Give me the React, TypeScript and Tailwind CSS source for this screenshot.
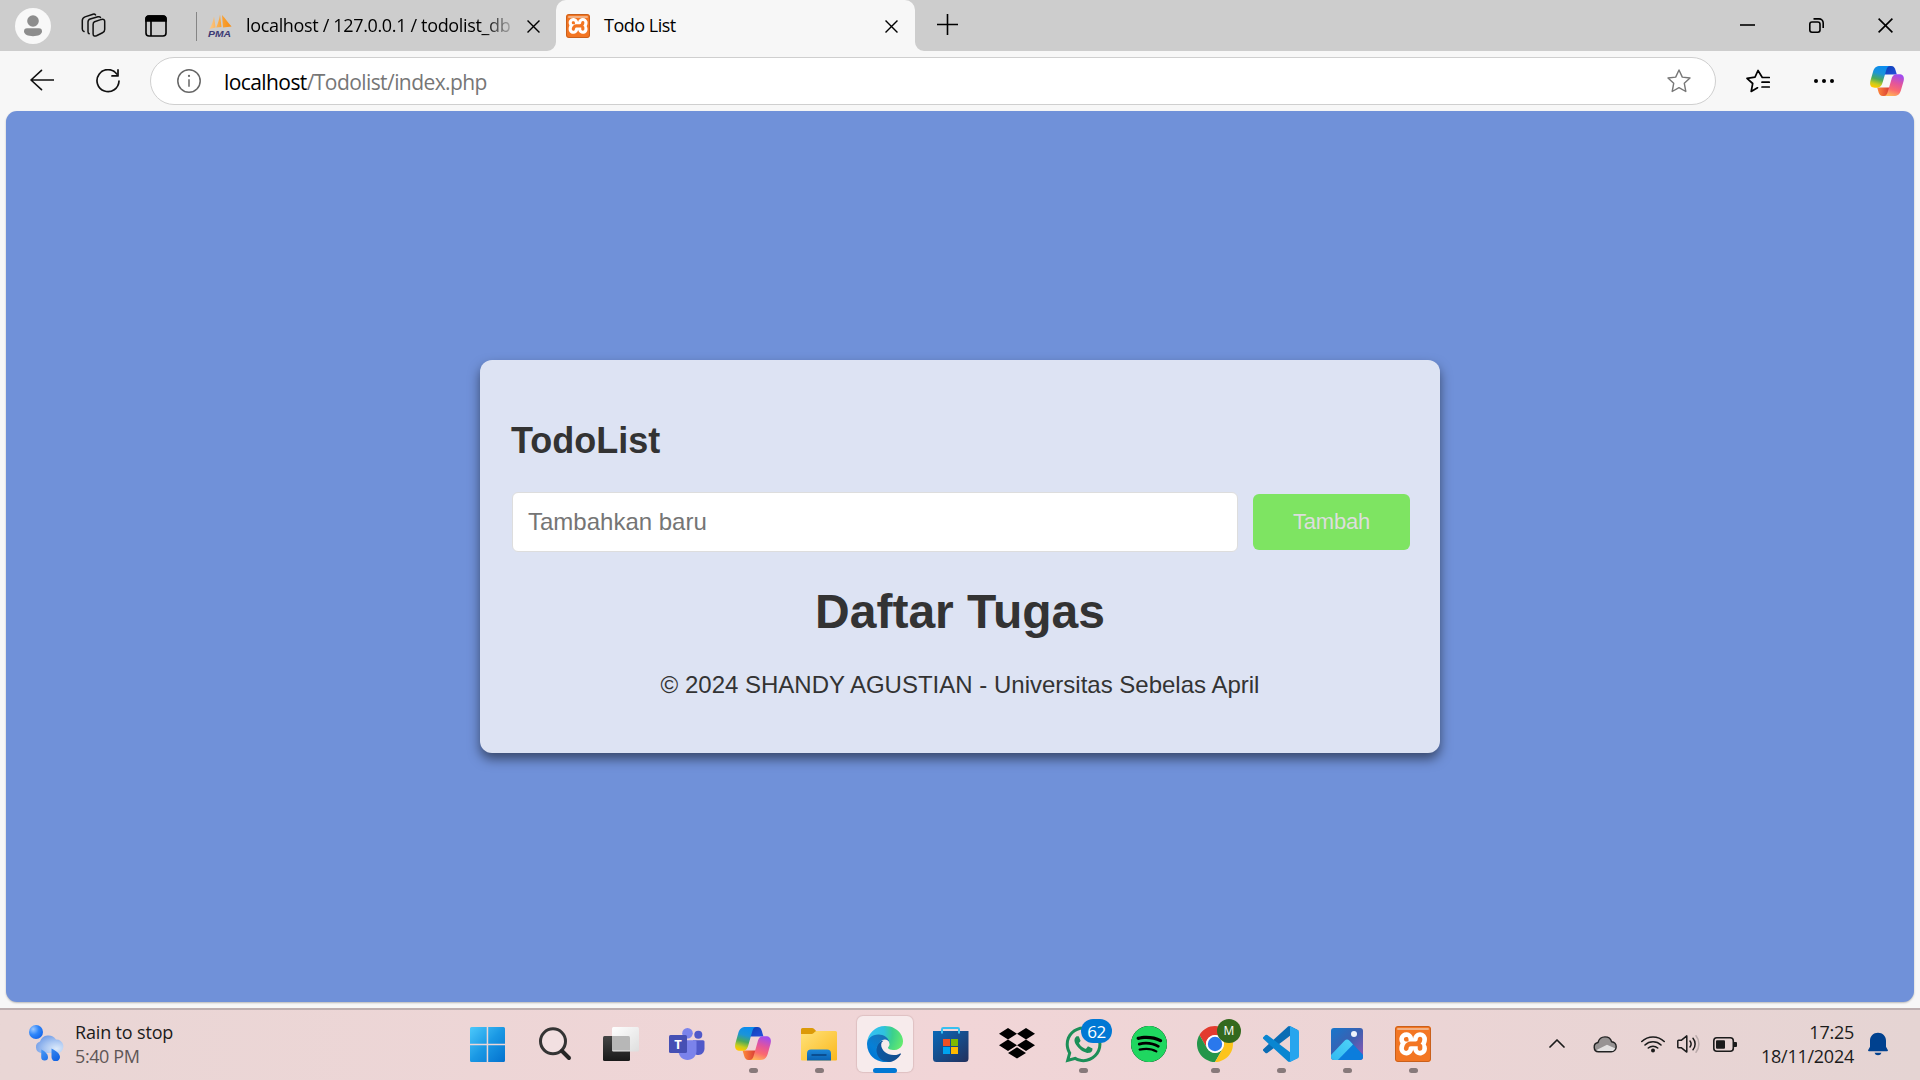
import React from "react";
import { SiSpotify, SiXampp } from "react-icons/si";
import { FaWhatsapp } from "react-icons/fa";

const ui = "font-['Open_Sans','Noto_Sans',sans-serif]";
const arial = "font-['Liberation_Sans',Arial,sans-serif]";

type IconProps = { className?: string };

function Cross({ className }: IconProps) {
  return (
    <svg viewBox="0 0 15 15" className={className} fill="none" stroke="#000" strokeWidth="1.6">
      <path d="M.6.6l13.8 13.8M14.4.6L.6 14.4" />
    </svg>
  );
}

function Xampp({ className }: IconProps) {
  return (
    <div className={`relative overflow-hidden rounded-[3px] bg-white ${className}`}>
      <SiXampp className="absolute -inset-px h-[calc(100%+2px)] w-[calc(100%+2px)] text-[#f37623]" />
      <div className="absolute inset-0 rounded-[3px] border-[1.5px] border-[#c9601c]" />
      <div className="absolute inset-x-[2px] top-[1.5px] h-[2px] rounded bg-[#f2b184]" />
    </div>
  );
}

function Copilot({ id, className }: IconProps & { id: string }) {
  const ribbon =
    "M11 0H21.500C18.900 0 18 1.800 17.100 5L13.400 18C12.200 22.200 10.800 23.800 7.600 23.800H5.200C.4 23.800-.5 20.300.4 16.500L3.300 6C4.600 1.800 6.600 0 11 0Z";
  const fold = "M17 0H22.500C25 0 26.100 1.600 26.900 4.200L28.400 9.400H15Z";
  return (
    <svg viewBox="0 0 36 33" className={className} preserveAspectRatio="none">
      <defs>
        <linearGradient id={id + "a"} x1=".6" y1="0" x2=".35" y2="1">
          <stop offset="0" stopColor="#0a8cf0" />
          <stop offset=".35" stopColor="#1c94d8" />
          <stop offset=".62" stopColor="#4aa95c" />
          <stop offset=".85" stopColor="#c9cc1c" />
          <stop offset="1" stopColor="#ffc800" />
        </linearGradient>
        <linearGradient id={id + "b"} x1=".35" y1="1" x2=".65" y2="0">
          <stop offset="0" stopColor="#a04cf0" />
          <stop offset=".4" stopColor="#e3559b" />
          <stop offset=".7" stopColor="#fa6a70" />
          <stop offset="1" stopColor="#ffb45a" />
        </linearGradient>
        <linearGradient id={id + "c"} x1="0" y1="0" x2="1" y2="1">
          <stop offset="0" stopColor="#0c3fb4" />
          <stop offset="1" stopColor="#2450dc" />
        </linearGradient>
        <linearGradient id={id + "d"} x1="0" y1="0" x2="1" y2="0">
          <stop offset="0" stopColor="#d83a34" />
          <stop offset="1" stopColor="#ff8a3c" />
        </linearGradient>
      </defs>
      <path d={fold} fill={`url(#${id}c)`} />
      <path d={fold} fill={`url(#${id}d)`} transform="rotate(180 18 16.500)" />
      <path d={ribbon} fill={`url(#${id}a)`} />
      <path d={ribbon} fill={`url(#${id}b)`} transform="rotate(180 18 16.500)" />
    </svg>
  );
}

function PmaIcon() {
  return (
    <svg viewBox="0 0 24 24" className="h-6 w-6 overflow-visible">
      <defs>
        <linearGradient id="sail" x1="0" x2="1">
          <stop offset="0" stopColor="#fbc98c" />
          <stop offset=".5" stopColor="#f9a63c" />
          <stop offset="1" stopColor="#f68c12" />
        </linearGradient>
      </defs>
      <path d="M6 3.500L7.600 14.500 1.500 16C3.600 12.500 5.200 8.500 6 3.500ZM12 1.500L13.500 14 8.200 14.400C9.800 10.400 11.400 6.400 12 1.500ZM14 2C18 6 20 10 23.600 13.600L15 14.400Z" fill="url(#sail)" />
      <text x="0" y="23.600" fontSize="9" fontWeight="700" fontStyle="italic" fill="#3c3a74" textLength="23" lengthAdjust="spacingAndGlyphs" fontFamily="Liberation Sans, sans-serif">PMA</text>
    </svg>
  );
}

function TabStrip() {
  return (
    <div className="flex h-[51px] bg-[#cdcdcd]">
      <div className="ml-[15px] mt-2 h-9 w-9">
        <svg viewBox="0 0 36 36">
          <circle cx="18" cy="18" r="18" fill="#f8f8f8" />
          <circle cx="18" cy="13" r="5.800" fill="#8d8d8d" />
          <path d="M12 20.300h12a3 3 0 0 1 3 3c0 3.200-4 4.900-9 4.900s-9-1.700-9-4.900a3 3 0 0 1 3-3z" fill="#8d8d8d" />
        </svg>
      </div>
      <svg viewBox="0 0 25 25" className="ml-[30px] mt-[13px] h-[25px] w-[25px]" fill="none" stroke="#111" strokeWidth="1.500" strokeLinejoin="round" strokeLinecap="round">
        <path d="M13.500 8.700l7-2.300q3.200-.8 3.200 2.200v8q0 2.300-2.200 3.200l-6 2.900q-3.400 1.400-3.400-2V11.500q0-2.200 1.400-2.800Z" />
        <path d="M19.500 4.500q-.6-1.200-2.600-.7L9.200 6Q7 6.700 7 9.100v9.400q0 1.800 1.200 2.300" />
        <path d="M14.500 1.900q-.8-1.200-2.500-.7L4 3.900Q1.300 5 1.300 7.600v8.400q0 2 1.700 2.500" />
      </svg>
      <svg viewBox="0 0 22 22" className="ml-[39px] mt-[15px] h-[22px] w-[22px]" fill="none" stroke="#000" strokeWidth="1.600">
        <rect x="1" y="1" width="20" height="20" rx="3" />
        <path d="M1 6V4a3 3 0 0 1 3-3h14a3 3 0 0 1 3 3v2z" fill="#000" />
        <path d="M6 6v15" />
      </svg>
      <div className="ml-[29px] mt-3 h-[29px] w-px bg-[#858585]" />
      <div className="ml-[11px] mt-[13px]"><PmaIcon /></div>
      <div className={`ml-[14px] mt-3 w-[265px] overflow-hidden whitespace-nowrap text-[18px] leading-[27px] tracking-[-0.34px] text-black ${ui} [mask-image:linear-gradient(90deg,#000_90%,transparent_102%)]`}>
        localhost / 127.0.0.1 / todolist_db
      </div>
      <Cross className="ml-4 mt-5 h-[13px] w-[13px]" />
      <div className="relative ml-4 flex h-[51px] w-[359px] rounded-t-[10px] bg-[#f7f7f7]">
        <svg viewBox="0 0 9 9" className="absolute -left-[9px] bottom-0 h-[9px] w-[9px]"><path d="M9 0v9H0a9 9 0 0 0 9-9z" fill="#f7f7f7" /></svg>
        <svg viewBox="0 0 9 9" className="absolute -right-[9px] bottom-0 h-[9px] w-[9px]"><path d="M0 0v9h9a9 9 0 0 1-9-9z" fill="#f7f7f7" /></svg>
        <Xampp className="ml-[10px] mt-[14px] h-6 w-6" />
        <div className={`ml-[14px] mt-3 w-[268px] text-[18px] leading-[27px] tracking-[-0.500px] text-black ${ui}`}>Todo List</div>
        <Cross className="ml-[13px] mt-5 h-[13px] w-[13px]" />
      </div>
      <svg viewBox="0 0 21 21" className="ml-[22px] mt-[14px] h-[21px] w-[21px]" stroke="#000" strokeWidth="1.600"><path d="M10.500 0v21M0 10.500h21" /></svg>
      <div className="ml-auto mr-[27px] mt-[18px] flex gap-[54px]">
        <svg viewBox="0 0 15 15" className="h-[15px] w-[15px]" stroke="#000" strokeWidth="1.600"><path d="M0 7h15" /></svg>
        <svg viewBox="0 0 15 15" className="h-[15px] w-[15px]" fill="none" stroke="#000" strokeWidth="1.600">
          <rect x=".8" y="4" width="10.200" height="10.200" rx="2.200" />
          <path d="M4.500.900h5.500a4.200 4.200 0 0 1 4.200 4.200V10" />
        </svg>
        <Cross className="h-[15px] w-[15px]" />
      </div>
    </div>
  );
}

function Toolbar() {
  return (
    <div className="flex h-[60px] items-start bg-[#f7f7f7]">
      <svg viewBox="0 0 24 22" className="ml-[30px] mt-[18px] h-[22px] w-6" fill="none" stroke="#111" strokeWidth="1.600" strokeLinecap="round" strokeLinejoin="round">
        <path d="M11.500 1.300L1 11l10.500 9.700M1 11h22.500" />
      </svg>
      <svg viewBox="0 0 24 24" className="ml-[42px] mt-[18px] h-6 w-6" fill="none" stroke="#111" strokeWidth="1.700" strokeLinecap="round" strokeLinejoin="round">
        <path d="M20.800 5A11 11 0 1 0 23 12" />
        <path d="M22 .9v6h-6" />
      </svg>
      <div className="ml-[30px] mt-[6px] flex h-12 w-[1566px] items-center rounded-full border border-[#cfcfcf] bg-white">
        <svg viewBox="0 0 24 24" className="ml-[26px] h-6 w-6" fill="none" stroke="#666" strokeWidth="1.500">
          <circle cx="12" cy="12" r="11.200" />
          <path d="M12 10.300v7.500" />
          <circle cx="12" cy="6.900" r="1.100" fill="#666" stroke="none" />
        </svg>
        <div className={`ml-[23px] mt-[2px] text-[21px] leading-none tracking-[-0.580px] text-[#767676] ${ui}`}>
          <span className="text-black">localhost</span>/Todolist/index.php
        </div>
        <svg viewBox="0 0 24 24" className="ml-auto mr-6 h-6 w-6" fill="none" stroke="#777" strokeWidth="1.400" strokeLinejoin="round">
          <path d="M12 1l3.300 7.100 7.700.9-5.700 5.300 1.500 8.200L12 18.700l-6.800 3.800 1.500-8.200L1 9l7.700-.9z" />
        </svg>
      </div>
      <svg viewBox="0 0 24 24" className="ml-[30px] mt-[18px] h-6 w-6" fill="none" stroke="#000" strokeWidth="1.700" strokeLinejoin="round" strokeLinecap="round">
        <path d="M23.300 8.500h-7L12 1.500 9 8.200 1 9.300l5.700 5.200-1.500 8 6.300-3.700" />
        <path d="M16 13.200h7.300M16 18h7.300" />
      </svg>
      <svg viewBox="0 0 20 4" className="ml-11 mt-7 h-1 w-5"><circle cx="2" cy="2" r="2" /><circle cx="10" cy="2" r="2" /><circle cx="18" cy="2" r="2" /></svg>
      <Copilot id="ct" className="ml-9 mt-[15px] h-[30px] w-[34px]" />
    </div>
  );
}

function TodoCard() {
  return (
    <div className={`h-[393px] w-[960px] rounded-[12px] bg-[#dde3f3] text-[#333] shadow-[0_6px_12px_rgba(0,0,0,0.5)] ${arial}`}>
      <h2 className="ml-[31px] pt-[60px] text-[36px] font-bold leading-[41px]">TodoList</h2>
      <div className="ml-8 mt-[31px] flex items-center">
        <div className="flex h-[60px] w-[726px] items-center rounded-[6px] border border-[#ddd] bg-white pl-[15px] text-[24px] leading-[28px] text-[#757575]">
          Tambahkan baru
        </div>
        <button className="ml-[15px] h-14 w-[157px] rounded-[6px] bg-[#7ee462] pb-px text-[22px] leading-6 tracking-[-0.200px] text-[#ddd]">Tambah</button>
      </div>
      <h1 className="mt-[33px] text-center text-[48px] font-bold leading-[54px]">Daftar Tugas</h1>
      <p className="mt-[32px] text-center text-[24px] leading-[28px]">© 2024 SHANDY AGUSTIAN - Universitas Sebelas April</p>
    </div>
  );
}

function WeatherIcon() {
  return (
    <svg viewBox="0 0 36 36" className="h-9 w-9">
      <defs>
        <radialGradient id="moon" cx=".3" cy=".3" r=".8"><stop offset="0" stopColor="#9cc8ff" /><stop offset=".5" stopColor="#2f86fa" /><stop offset="1" stopColor="#1464e8" /></radialGradient>
        <radialGradient id="cloud" cx=".75" cy=".75" r=".85"><stop offset="0" stopColor="#dceafb" /><stop offset=".5" stopColor="#a9c6f2" /><stop offset="1" stopColor="#6f9be6" /></radialGradient>
        <linearGradient id="drop" x1="0" y1="0" x2="1" y2="1"><stop offset="0" stopColor="#4a9cf8" /><stop offset="1" stopColor="#0a5ce0" /></linearGradient>
      </defs>
      <circle cx="7" cy="7" r="7" fill="url(#moon)" />
      <path d="M12 28a6 6 0 0 1-1-11.600A9 9 0 0 1 27 14.500a7 7 0 0 1 3 13.500z" fill="url(#cloud)" />
      <path d="M12.300 24.500c4 2 6.700 4.500 6.700 7.500a3.400 3.400 0 0 1-6.800.3zM22.500 23.500c5 2.500 8.500 5.200 8.500 8.500a4.200 4.200 0 0 1-8.500.2z" fill="url(#drop)" />
    </svg>
  );
}

function StartIcon() {
  return (
    <svg viewBox="0 0 35 35" className="h-[35px] w-[35px]">
      <defs><linearGradient id="win" x1="0" y1="0" x2="35" y2="35" gradientUnits="userSpaceOnUse"><stop offset="0" stopColor="#4cc9fb" /><stop offset=".5" stopColor="#1a98e4" /><stop offset="1" stopColor="#0371ce" /></linearGradient></defs>
      <path d="M1.500 0H16.700V16.700H0V1.500A1.500 1.500 0 0 1 1.500 0ZM18.200 0h15.300A1.500 1.500 0 0 1 35 1.500v15.200H18.200ZM0 18.200h16.700V35H1.500A1.500 1.500 0 0 1 0 33.500ZM18.200 18.200H35v15.300a1.500 1.500 0 0 1-1.500 1.500H18.200Z" fill="url(#win)" />
    </svg>
  );
}

function SearchIcon() {
  return (
    <svg viewBox="0 0 36 36" className="h-9 w-9" fill="none">
      <circle cx="16" cy="15.300" r="12.500" fill="#f2e0e1" stroke="#343434" strokeWidth="3" />
      <path d="M25 25l7 7" stroke="#262626" strokeWidth="4" strokeLinecap="round" />
    </svg>
  );
}

function TaskViewIcon() {
  return (
    <svg viewBox="0 0 36 36" className="h-9 w-9">
      <defs>
        <linearGradient id="tvd" x1="0" y1="0" x2="0" y2="1"><stop offset="0" stopColor="#454545" /><stop offset="1" stopColor="#191919" /></linearGradient>
        <linearGradient id="tvl" x1="0" y1="0" x2="1" y2="1"><stop offset="0" stopColor="#fff" /><stop offset="1" stopColor="#dedede" /></linearGradient>
      </defs>
      <rect x="0" y="10" width="27" height="25" rx="1.500" fill="url(#tvd)" />
      <rect x="9" y="1" width="27" height="24.500" rx="1.500" fill="url(#tvl)" />
      <path d="M9 10h16.500A1.500 1.500 0 0 1 27 11.500V24.500H9z" fill="#b7b7b7" />
    </svg>
  );
}

function TeamsIcon() {
  return (
    <svg viewBox="0 0 36 36" className="h-9 w-9">
      <circle cx="29.300" cy="8.700" r="4" fill="#5059c9" />
      <path d="M24 14.300h10a1.500 1.500 0 0 1 1.500 1.500v6.500c0 4-2.700 6.700-6 6.700s-5.500-2-5.500-6z" fill="#5059c9" />
      <circle cx="18.500" cy="7.200" r="5.300" fill="#7b83eb" />
      <path d="M11 14.300h15a1.500 1.500 0 0 1 1.500 1.500V25c0 5-4 9-9 9s-9-4-9-9z" fill="#7b83eb" />
      <rect x="0" y="9" width="18" height="18" rx="1.500" fill="#4650b4" />
      <text x="9" y="22.500" fontSize="13" fontWeight="700" fill="#fff" textAnchor="middle" fontFamily="Open Sans, sans-serif">T</text>
    </svg>
  );
}

function ExplorerIcon() {
  return (
    <svg viewBox="0 0 36 36" className="h-9 w-9">
      <defs>
        <linearGradient id="fo" x1="0" y1="0" x2="1" y2="1"><stop offset="0" stopColor="#ffe27a" /><stop offset="1" stopColor="#fbb81c" /></linearGradient>
        <linearGradient id="fb" x1="0" y1="0" x2="0" y2="1"><stop offset="0" stopColor="#1c87d8" /><stop offset="1" stopColor="#0b63b4" /></linearGradient>
      </defs>
      <path d="M0 3.500A1.500 1.500 0 0 1 1.500 2H11q1.300 0 2.200 1L16 6v3H0z" fill="#dc9a08" />
      <path d="M0 8h10.500q1.200 0 2.200-1l1-1q1-1 2.300-1H34.500A1.500 1.500 0 0 1 36 6.500V33.500A1 1 0 0 1 35 34.500H1A1 1 0 0 1 0 33.500z" fill="url(#fo)" />
      <path d="M6 34.500V27.500a4 4 0 0 1 4-4h16a4 4 0 0 1 4 4v7z" fill="url(#fb)" />
      <path d="M10.500 29h15" stroke="#0a4a8c" strokeWidth="1.800" />
    </svg>
  );
}

function EdgeIcon() {
  return (
    <svg viewBox="0 0 256 256" className="h-9 w-9">
      <defs>
        <linearGradient id="e1" x1="63" y1="177" x2="241" y2="177" gradientUnits="userSpaceOnUse"><stop offset="0" stopColor="#0c59a4" /><stop offset="1" stopColor="#114a8b" /></linearGradient>
        <linearGradient id="e2" x1="157" y1="90" x2="46" y2="220" gradientUnits="userSpaceOnUse"><stop offset="0" stopColor="#1b6fb2" /><stop offset=".3" stopColor="#1279c4" /><stop offset=".7" stopColor="#0680d7" /><stop offset="1" stopColor="#0078d4" /></linearGradient>
        <radialGradient id="e3" cx="26" cy="46" r="240" gradientUnits="userSpaceOnUse"><stop offset="0" stopColor="#35c1f1" /><stop offset=".4" stopColor="#2fc2df" /><stop offset=".65" stopColor="#3bd08c" /><stop offset="1" stopColor="#66eb6e" /></radialGradient>
      </defs>
      <path fill="url(#e1)" d="M235.680 195.500a93.730 93.730 0 0 1-10.540 4.710 101.870 101.870 0 0 1-35.900 6.460c-47.320 0-88.540-32.550-88.540-74.320a31.480 31.480 0 0 1 16.430-27.310c-42.800 1.800-53.800 46.400-53.800 72.530 0 73.880 68.090 81.370 82.760 81.370 7.910 0 19.840-2.300 27-4.560l1.310-.44a128.340 128.340 0 0 0 66.600-52.800 4 4 0 0 0-5.320-5.640Z" />
      <path fill="url(#e2)" d="M105.730 241.420a79.200 79.200 0 0 1-22.740-21.340 80.720 80.720 0 0 1 29.530-120c3.120-1.470 8.450-4.130 15.540-4a32.350 32.350 0 0 1 25.690 13 31.880 31.880 0 0 1 6.360 18.660c0-.21 24.460-79.600-80-79.600-43.900 0-80 41.660-80 78.210a130.150 130.150 0 0 0 12.110 56 128 128 0 0 0 156.380 67.110 75.550 75.550 0 0 1-62.780-8Z" />
      <path fill="url(#e3)" d="M152.330 148.860c-.81 1.050-3.300 2.500-3.300 5.660 0 2.610 1.700 5.120 4.720 7.230 14.380 10 41.490 8.680 41.560 8.680a59.560 59.560 0 0 0 30.270-8.350 61.380 61.380 0 0 0 30.430-52.880c.26-22.410-8-37.310-11.340-43.910C223.510 23.800 177.720 0 128 0A128 128 0 0 0 0 126.200c.48-36.540 36.800-66.050 80-66.050 3.500 0 23.460.34 42 10.070 16.340 8.580 24.900 18.940 30.850 29.210 6.180 10.670 7.280 24.150 7.280 29.520s-2.740 13.330-7.800 19.910Z" />
    </svg>
  );
}

function StoreIcon() {
  return (
    <svg viewBox="0 0 36 36" className="h-9 w-9">
      <defs><linearGradient id="st" x1="0" y1="0" x2="1" y2="1"><stop offset="0" stopColor="#0a68b8" /><stop offset="1" stopColor="#23305c" /></linearGradient></defs>
      <path d="M0 5h35.500v27.500a3.500 3.500 0 0 1-3.500 3.500H3.500A3.500 3.500 0 0 1 0 32.500z" fill="url(#st)" />
      <path d="M9 7.500V3.200A1.200 1.200 0 0 1 10.200 2h14.600A1.200 1.200 0 0 1 26 3.200V7.500" fill="none" stroke="#38c0f0" strokeWidth="2" />
      <path d="M10 13h7v7h-7z" fill="#f25022" /><path d="M18 13h7v7h-7z" fill="#7fba00" />
      <path d="M10 21h7v7h-7z" fill="#00a4ef" /><path d="M18 21h7v7h-7z" fill="#ffb900" />
    </svg>
  );
}

function DropboxIcon() {
  return (
    <svg viewBox="0 0 36 36" className="h-9 w-9">
      <path d="M9 2l9 5.700-9 5.700-9-5.700zM27 2l9 5.700-9 5.700-9-5.700zM9 13.500l9 5.700-9 5.700-9-5.700zM27 13.500l9 5.700-9 5.700-9-5.700zM18 21.200l9 5.700-9 5.700-9-5.700z" />
    </svg>
  );
}

function ChromeIcon() {
  return (
    <svg viewBox="0 0 48 48" className="h-9 w-9">
      <path d="M24 12H44.780A24 24 0 0 0 3.220 12L13.610 30A12 12 0 0 1 24 12Z" fill="#e33b2e" />
      <path d="M13.610 30L3.220 12A24 24 0 0 0 24 48L34.390 30A12 12 0 0 1 13.610 30Z" fill="#23964a" />
      <path d="M34.390 30L24 48A24 24 0 0 0 44.780 12H24A12 12 0 0 1 34.390 30Z" fill="#fcc41c" />
      <circle cx="24" cy="24" r="12" fill="#fff" />
      <circle cx="24" cy="24" r="9.600" fill="#2a78ec" />
    </svg>
  );
}

function CodeIcon() {
  const bar =
    "M96.460 10.800L75.860.880a6.230 6.230 0 0 0-7.100 1.200L1.300 63.600a4.170 4.170 0 0 0 0 6.160l5.510 5.010a4.170 4.170 0 0 0 5.320.24l81.230-61.620c2.720-2.070 6.630-.13 6.630 3.300v-.24a6.250 6.250 0 0 0-3.540-5.630Z";
  return (
    <svg viewBox="0 0 100 100" className="h-9 w-9">
      <path d={bar} fill="#0a6cb4" />
      <path d={bar} fill="#0a86d1" transform="matrix(1 0 0 -1 0 100)" />
      <path d="M75.860 99.130a6.230 6.230 0 0 1-7.100-1.210c2.300 2.300 6.240.67 6.240-2.580V4.660c0-3.260-3.940-4.900-6.240-2.590a6.230 6.230 0 0 1 7.100-1.200l20.600 9.900A6.250 6.250 0 0 1 100 16.400v67.200c0 2.400-1.370 4.600-3.540 5.640l-20.600 9.900Z" fill="#27a5ee" />
    </svg>
  );
}

function PhotosIcon() {
  return (
    <svg viewBox="0 0 36 36" className="h-9 w-9">
      <defs>
        <linearGradient id="pb" x1="0" y1="0" x2="1" y2="1"><stop offset="0" stopColor="#1677cc" /><stop offset=".5" stopColor="#3c5fb0" /><stop offset="1" stopColor="#9a55b4" /></linearGradient>
        <linearGradient id="pm" x1="0" y1="1" x2=".8" y2="0"><stop offset="0" stopColor="#2fb8f0" /><stop offset="1" stopColor="#4cd0f8" /></linearGradient>
        <clipPath id="pc"><rect x="2" y="2" width="32" height="32" rx="3" /></clipPath>
      </defs>
      <g clipPath="url(#pc)">
        <rect x="2" y="2" width="32" height="32" fill="url(#pb)" />
        <path d="M18 13.500q1.500 0 3 1.500L36 31v7H8V28z" fill="#0b7ddc" />
        <path d="M2 29L15.500 14.700q2.500-2.500 5 0l3.500 3.700L7 36H2z" fill="url(#pm)" />
        <circle cx="25" cy="8" r="3" fill="#eef3fb" />
      </g>
    </svg>
  );
}

function TaskItem({ children, running, active }: { children: React.ReactNode; running?: boolean; active?: boolean }) {
  return (
    <div className={`relative flex h-14 w-14 items-center justify-center rounded-[6px] ${active ? "bg-[#f7ebec] shadow-[0_0_1px_1px_rgba(120,80,80,0.15)]" : ""}`}>
      {children}
      {running && <div className="absolute bottom-[-1px] left-[23.5px] h-[5px] w-[9px] rounded-full bg-[#87797a]" />}
      {active && <div className="absolute bottom-[-1px] left-4 h-[5px] w-6 rounded-full bg-[#0078d4]" />}
    </div>
  );
}

function Taskbar() {
  return (
    <div className={`flex h-[72px] items-start border-t-2 border-[#bdafb0] bg-linear-to-r from-[#e9d6d5] via-[#f1d5d7] to-[#e5d4d3] ${ui}`}>
      <div className="flex w-[459px] shrink-0">
        <div className="ml-[29px] mt-[15px]"><WeatherIcon /></div>
        <div className="ml-[10px] mt-[10px] text-[18px] leading-6 tracking-[-0.160px]">
          <div className="text-[#1b1b1b]">Rain to stop</div>
          <div className="tracking-[-0.400px] text-[#5f5757]">5:40 PM</div>
        </div>
      </div>
      <div className="mt-[6px] flex gap-[10px]">
        <div className="mr-[2px]"><TaskItem><StartIcon /></TaskItem></div>
        <TaskItem><SearchIcon /></TaskItem>
        <TaskItem><TaskViewIcon /></TaskItem>
        <TaskItem><TeamsIcon /></TaskItem>
        <TaskItem running><Copilot id="cb" className="-mt-[1px] h-[33px] w-9" /></TaskItem>
        <TaskItem running><ExplorerIcon /></TaskItem>
        <TaskItem active><EdgeIcon /></TaskItem>
        <TaskItem><StoreIcon /></TaskItem>
        <TaskItem><DropboxIcon /></TaskItem>
        <TaskItem running>
          <FaWhatsapp className="h-[41px] w-[41px] text-[#1c8f58]" />
          <div className="absolute left-[26px] top-[3px] flex h-6 w-[31px] items-center justify-center rounded-full bg-[#0078d4] text-[17px] leading-none tracking-[-0.500px] text-white">62</div>
        </TaskItem>
        <TaskItem>
          <div className="flex h-9 w-9 items-center justify-center rounded-full bg-black"><SiSpotify className="h-9 w-9 text-[#1fd760]" /></div>
        </TaskItem>
        <TaskItem running>
          <ChromeIcon />
          <div className="absolute left-[30px] top-[3px] flex h-6 w-6 items-center justify-center rounded-full bg-[#33691e] text-[12px] leading-none text-white">M</div>
        </TaskItem>
        <TaskItem running><CodeIcon /></TaskItem>
        <TaskItem running><PhotosIcon /></TaskItem>
        <TaskItem running><Xampp className="h-9 w-9" /></TaskItem>
      </div>
      <div className="ml-auto flex">
        <svg viewBox="0 0 16 9" className="mr-7 mt-[29px] h-[9px] w-4" fill="none" stroke="#1b1b1b" strokeWidth="1.700" strokeLinecap="round" strokeLinejoin="round"><path d="M1 8l7-7 7 7" /></svg>
        <svg viewBox="0 0 24 17" className="mr-6 mt-[26px] h-[17px] w-6">
          <path d="M5.500 15.800a4.700 4.700 0 0 1-.5-9.300C6 2.800 8.700.9 12 .9c3.200 0 5.800 1.900 6.600 4.800 2.700.2 4.600 2.400 4.600 5 0 3-2.200 5.100-5 5.100z" fill="#979393" />
          <path d="M2.500 14.500L14 8.800l8.500 3.700c-.6 2-2.200 3.300-4.300 3.300H5.500c-1.200 0-2.200-.5-3-1.300z" fill="#e2e0e0" />
          <path d="M5.500 15.800a4.700 4.700 0 0 1-.5-9.300C6 2.800 8.700.9 12 .9c3.200 0 5.800 1.900 6.600 4.800 2.700.2 4.600 2.400 4.600 5 0 3-2.200 5.100-5 5.100z" fill="none" stroke="#222" strokeWidth="1.400" />
        </svg>
        <svg viewBox="0 0 24 18" className="mr-3 mt-[25px] h-[18px] w-6" fill="none" stroke="#1b1b1b" strokeWidth="1.600" strokeLinecap="round">
          <path d="M.8 6.500a16 16 0 0 1 22.400 0M4 10a11.500 11.500 0 0 1 16 0M7.300 13a7 7 0 0 1 9.400 0" />
          <circle cx="12" cy="15.500" r="2" fill="#1b1b1b" stroke="none" />
        </svg>
        <svg viewBox="0 0 24 18" className="mr-3 mt-[25px] h-[18px] w-6" fill="none" stroke="#1b1b1b" strokeWidth="1.500" strokeLinecap="round" strokeLinejoin="round">
          <path d="M.8 6q0-.8.8-.8h2.900L9.800.9v16.200L4.500 12.800H1.600q-.8 0-.8-.8z" />
          <path d="M13 6a5 5 0 0 1 0 6M16 3.200a9 9 0 0 1 0 11.600" />
          <path d="M19 .8a13 13 0 0 1 0 16.400" stroke="#b9aaaa" />
        </svg>
        <svg viewBox="0 0 24 15" className="mr-[25px] mt-[27px] h-[15px] w-6">
          <rect x=".8" y=".8" width="19.500" height="13.400" rx="3" fill="none" stroke="#1b1b1b" strokeWidth="1.600" />
          <rect x="3" y="3.300" width="9" height="8.400" rx="1" fill="#1b1b1b" />
          <path d="M20.500 5H23a1 1 0 0 1 1 1v3a1 1 0 0 1-1 1h-2.500z" fill="#1b1b1b" />
        </svg>
        <div className="mt-[10px] w-[92px] whitespace-nowrap text-[18px] leading-6 tracking-[-0.250px] text-[#1b1b1b]">
          <div className="flex justify-end">17:25</div>
          <div className="flex justify-end">18/11/2024</div>
        </div>
        <svg viewBox="0 0 20 24" className="ml-[14px] mr-8 mt-[22px] h-6 w-5" fill="#00418f">
          <path d="M10 .8c4.600 0 8 3.500 8 8v6l1.800 3.200q.5 1.200-.8 1.200H1q-1.300 0-.8-1.200L2 14.800v-6c0-4.500 3.400-8 8-8zM6.500 20.700h7q-.8 2.600-3.500 2.600t-3.500-2.600z" />
        </svg>
      </div>
    </div>
  );
}

export default function App() {
  return (
    <div className="flex h-[1080px] w-[1920px] flex-col overflow-hidden bg-[#f7f7f7]">
      <TabStrip />
      <Toolbar />
      <main className="mx-[6px] mb-[6px] flex h-[891px] justify-center rounded-[11px] bg-[#7091d9] pt-[249px] shadow-[0_1px_2px_rgba(0,0,0,0.25)]">
        <TodoCard />
      </main>
      <Taskbar />
    </div>
  );
}
